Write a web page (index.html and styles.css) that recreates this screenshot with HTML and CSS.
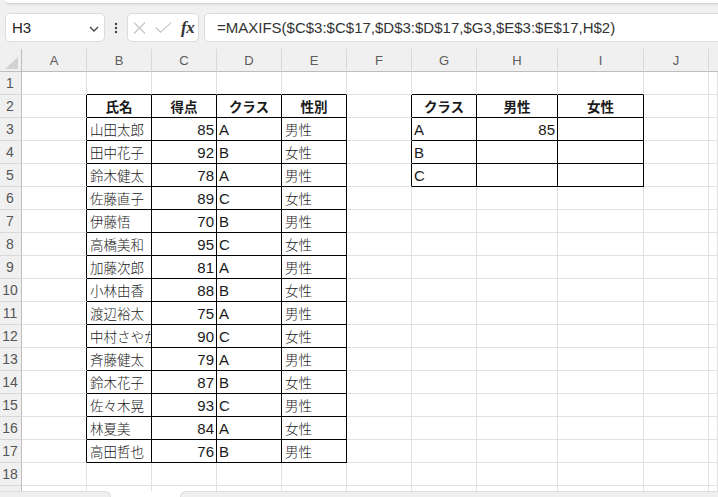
FILE: index.html
```html
<!DOCTYPE html>
<html lang="ja">
<head>
<meta charset="utf-8">
<title>MAXIFS</title>
<link rel="stylesheet" href="styles.css">
</head>
<body>
<div class="app">
  <div class="ribbon-edge"></div>
  <div class="fbar">
    <div class="namebox"><span class="nb-text">H3</span>
      <svg class="chev" width="10" height="6" viewBox="0 0 10 6"><path d="M1 1 L5 5 L9 1" fill="none" stroke="#444" stroke-width="1.3"/></svg>
    </div>
    <div class="dots"><svg width="4" height="12" viewBox="0 0 4 12"><circle cx="2" cy="2" r="1.2" fill="#444"/><circle cx="2" cy="6" r="1.2" fill="#444"/><circle cx="2" cy="10" r="1.2" fill="#444"/></svg></div>
    <div class="fxbox">
      <svg class="ic" width="13" height="12" viewBox="0 0 13 12"><path d="M1 0.5 L12 11.5 M12 0.5 L1 11.5" stroke="#c6c6c6" stroke-width="1.2" fill="none"/></svg>
      <svg class="ic" width="17" height="11" viewBox="0 0 17 11"><path d="M0.8 5.5 L5.5 10.2 L16.2 0.6" stroke="#c6c6c6" stroke-width="1.2" fill="none"/></svg>
      <span class="fx">fx</span>
    </div>
    <div class="finput">=MAXIFS($C$3:$C$17,$D$3:$D$17,$G3,$E$3:$E$17,H$2)</div>
  </div>

  <div class="sheet">
    <div class="corner"><span class="tri"></span></div>
    <div class="ch">A</div><div class="ch">B</div><div class="ch">C</div><div class="ch">D</div><div class="ch">E</div><div class="ch">F</div><div class="ch">G</div><div class="ch">H</div><div class="ch">I</div><div class="ch">J</div><div class="ch last"></div>

    <div class="rh">1</div><div class="c"></div><div class="c bB"></div><div class="c bB"></div><div class="c bB"></div><div class="c bB"></div><div class="c"></div><div class="c bB"></div><div class="c bB"></div><div class="c bB"></div><div class="c"></div><div class="c"></div>

    <div class="rh">2</div><div class="c bR"></div><div class="c t hd">氏名</div><div class="c t hd">得点</div><div class="c t hd">クラス</div><div class="c t hd">性別</div><div class="c bR"></div><div class="c t hd">クラス</div><div class="c t hd">男性</div><div class="c t hd">女性</div><div class="c"></div><div class="c"></div>

    <div class="rh">3</div><div class="c bR"></div><div class="c t">山田太郎</div><div class="c t num">85</div><div class="c t lat">A</div><div class="c t">男性</div><div class="c bR"></div><div class="c t lat">A</div><div class="c t num">85</div><div class="c t"></div><div class="c"></div><div class="c"></div>

    <div class="rh">4</div><div class="c bR"></div><div class="c t">田中花子</div><div class="c t num">92</div><div class="c t lat">B</div><div class="c t">女性</div><div class="c bR"></div><div class="c t lat">B</div><div class="c t"></div><div class="c t"></div><div class="c"></div><div class="c"></div>

    <div class="rh">5</div><div class="c bR"></div><div class="c t">鈴木健太</div><div class="c t num">78</div><div class="c t lat">A</div><div class="c t">男性</div><div class="c bR"></div><div class="c t lat">C</div><div class="c t"></div><div class="c t"></div><div class="c"></div><div class="c"></div>

    <div class="rh">6</div><div class="c bR"></div><div class="c t">佐藤直子</div><div class="c t num">89</div><div class="c t lat">C</div><div class="c t">女性</div><div class="c"></div><div class="c"></div><div class="c"></div><div class="c"></div><div class="c"></div><div class="c"></div>

    <div class="rh">7</div><div class="c bR"></div><div class="c t">伊藤悟</div><div class="c t num">70</div><div class="c t lat">B</div><div class="c t">男性</div><div class="c"></div><div class="c"></div><div class="c"></div><div class="c"></div><div class="c"></div><div class="c"></div>

    <div class="rh">8</div><div class="c bR"></div><div class="c t">高橋美和</div><div class="c t num">95</div><div class="c t lat">C</div><div class="c t">女性</div><div class="c"></div><div class="c"></div><div class="c"></div><div class="c"></div><div class="c"></div><div class="c"></div>

    <div class="rh">9</div><div class="c bR"></div><div class="c t">加藤次郎</div><div class="c t num">81</div><div class="c t lat">A</div><div class="c t">男性</div><div class="c"></div><div class="c"></div><div class="c"></div><div class="c"></div><div class="c"></div><div class="c"></div>

    <div class="rh">10</div><div class="c bR"></div><div class="c t">小林由香</div><div class="c t num">88</div><div class="c t lat">B</div><div class="c t">女性</div><div class="c"></div><div class="c"></div><div class="c"></div><div class="c"></div><div class="c"></div><div class="c"></div>

    <div class="rh">11</div><div class="c bR"></div><div class="c t">渡辺裕太</div><div class="c t num">75</div><div class="c t lat">A</div><div class="c t">男性</div><div class="c"></div><div class="c"></div><div class="c"></div><div class="c"></div><div class="c"></div><div class="c"></div>

    <div class="rh">12</div><div class="c bR"></div><div class="c t">中村さやか</div><div class="c t num">90</div><div class="c t lat">C</div><div class="c t">女性</div><div class="c"></div><div class="c"></div><div class="c"></div><div class="c"></div><div class="c"></div><div class="c"></div>

    <div class="rh">13</div><div class="c bR"></div><div class="c t">斉藤健太</div><div class="c t num">79</div><div class="c t lat">A</div><div class="c t">男性</div><div class="c"></div><div class="c"></div><div class="c"></div><div class="c"></div><div class="c"></div><div class="c"></div>

    <div class="rh">14</div><div class="c bR"></div><div class="c t">鈴木花子</div><div class="c t num">87</div><div class="c t lat">B</div><div class="c t">女性</div><div class="c"></div><div class="c"></div><div class="c"></div><div class="c"></div><div class="c"></div><div class="c"></div>

    <div class="rh">15</div><div class="c bR"></div><div class="c t">佐々木晃</div><div class="c t num">93</div><div class="c t lat">C</div><div class="c t">男性</div><div class="c"></div><div class="c"></div><div class="c"></div><div class="c"></div><div class="c"></div><div class="c"></div>

    <div class="rh">16</div><div class="c bR"></div><div class="c t">林夏美</div><div class="c t num">84</div><div class="c t lat">A</div><div class="c t">女性</div><div class="c"></div><div class="c"></div><div class="c"></div><div class="c"></div><div class="c"></div><div class="c"></div>

    <div class="rh">17</div><div class="c bR"></div><div class="c t">高田哲也</div><div class="c t num">76</div><div class="c t lat">B</div><div class="c t">男性</div><div class="c"></div><div class="c"></div><div class="c"></div><div class="c"></div><div class="c"></div><div class="c"></div>

    <div class="rh">18</div><div class="c"></div><div class="c"></div><div class="c"></div><div class="c"></div><div class="c"></div><div class="c"></div><div class="c"></div><div class="c"></div><div class="c"></div><div class="c"></div><div class="c"></div>

    <div class="rh"></div><div class="c"></div><div class="c"></div><div class="c"></div><div class="c"></div><div class="c"></div><div class="c"></div><div class="c"></div><div class="c"></div><div class="c"></div><div class="c"></div><div class="c"></div>
  </div>

  <div class="tabbar">
    <div class="tab tab-left"></div>
    <div class="tab tab-right"></div>
  </div>
</div>
</body>
</html>
```

FILE: styles.css
```css
html, body {
  margin: 0;
  padding: 0;
}
body {
  width: 718px;
  height: 497px;
  overflow: hidden;
  background: #f0f0f0;
  font-family: "Liberation Sans", "Noto Sans CJK JP", sans-serif;
}
.app {
  width: 718px;
  height: 497px;
  display: flex;
  flex-direction: column;
  overflow: hidden;
}
.ribbon-edge {
  height: 3px;
  margin-left: 5px;
  background: #fff;
  border-bottom: 1px solid #d4d4d4;
  border-bottom-left-radius: 6px;
  box-shadow: 0 1px 2px rgba(0, 0, 0, 0.08);
  flex: none;
}
.fbar {
  flex: none;
  display: flex;
  align-items: stretch;
  height: 29px;
  margin-top: 9px;
  padding-left: 5px;
}
.namebox {
  width: 100px;
  box-sizing: border-box;
  background: #fff;
  border: 1px solid #dcdcdc;
  border-radius: 5px;
  display: flex;
  align-items: center;
  justify-content: space-between;
  padding: 0 5px 0 6px;
}
.nb-text {
  font-size: 15px;
  color: #222;
}
.chev {
  margin-top: 2px;
}
.dots {
  width: 22px;
  display: flex;
  align-items: center;
  justify-content: center;
}
.fxbox {
  width: 72px;
  box-sizing: border-box;
  background: #fff;
  border: 1px solid #dcdcdc;
  border-radius: 5px;
  display: flex;
  align-items: center;
  padding-left: 5px;
  gap: 9px;
}
.fx {
  font-family: "Liberation Serif", serif;
  font-style: italic;
  font-weight: bold;
  font-size: 17px;
  color: #333;
  letter-spacing: -0.5px;
}
.finput {
  flex: 1;
  margin-left: 5px;
  margin-right: -12px;
  background: #fff;
  border: 1px solid #dcdcdc;
  border-radius: 5px;
  display: flex;
  align-items: center;
  padding-left: 12px;
  font-size: 15px;
  color: #333;
  white-space: nowrap;
}
.sheet {
  flex: none;
  margin-top: 7px;
  height: 442px;
  overflow: hidden;
  background: #fff;
  display: grid;
  grid-template-columns: 22px 65px 65px 65px 65px 65px 65px 65px 81px 86px 65px 1fr;
  grid-template-rows: repeat(21, 23px);
}
.sheet > div {
  box-sizing: border-box;
  overflow: hidden;
  white-space: nowrap;
}
.corner {
  background: #f0f0f0;
  border-right: 1px solid #bdbdbd;
  border-bottom: 1px solid #bdbdbd;
  position: relative;
}
.tri {
  position: absolute;
  left: 5px;
  top: 8px;
  width: 0;
  height: 0;
  border-left: 13px solid transparent;
  border-bottom: 12px solid #d2d2d2;
}
.ch {
  background: #f0f0f0;
  border-bottom: 1px solid #bdbdbd;
  border-right: 1px solid #d8d8d8;
  display: flex;
  align-items: center;
  justify-content: center;
  font-size: 13px;
  color: #5c5c5c;
  padding-top: 1px;
}
.ch.last {
  border-right: none;
}
.rh {
  background: #f0f0f0;
  border-right: 1px solid #bdbdbd;
  border-bottom: 1px solid #d8d8d8;
  display: flex;
  align-items: center;
  justify-content: center;
  font-family: "Liberation Sans Narrow", "Liberation Sans", sans-serif;
  font-size: 14px;
  color: #555;
  padding-right: 1px;
}
.c {
  border-right: 1px solid #e1e1e1;
  border-bottom: 1px solid #e1e1e1;
  display: flex;
  align-items: center;
  padding: 0 2px 0 3px;
  font-family: "Noto Sans CJK JP", sans-serif;
  font-size: 13.5px;
  font-weight: 300;
  color: #1a1a1a;
}
.c.bR {
  border-right-color: #000;
}
.c.bB {
  border-bottom-color: #000;
}
.c.t {
  border-right-color: #000;
  border-bottom-color: #000;
}
.c.hd {
  justify-content: center;
  font-weight: bold;
  padding: 0;
}
.c.num {
  justify-content: flex-end;
  font-family: "Liberation Sans Narrow", "Liberation Sans", sans-serif;
  font-weight: normal;
  font-size: 15px;
  padding-right: 2px;
}
.c.lat {
  font-family: "Liberation Sans Narrow", "Liberation Sans", sans-serif;
  font-weight: normal;
  font-size: 15px;
  padding-left: 2px;
}
.tabbar {
  flex: none;
  height: 6px;
  background: #fff;
  display: flex;
}
.tab {
  background: #efefef;
  border: 1px solid #dcdcdc;
  border-bottom: none;
  box-sizing: border-box;
  height: 7px;
}
.tab-left {
  width: 111px;
  border-left: none;
  border-top-right-radius: 6px;
}
.tab-right {
  flex: 1;
  margin-left: 69px;
  border-right: none;
  border-top-left-radius: 6px;
}
```
